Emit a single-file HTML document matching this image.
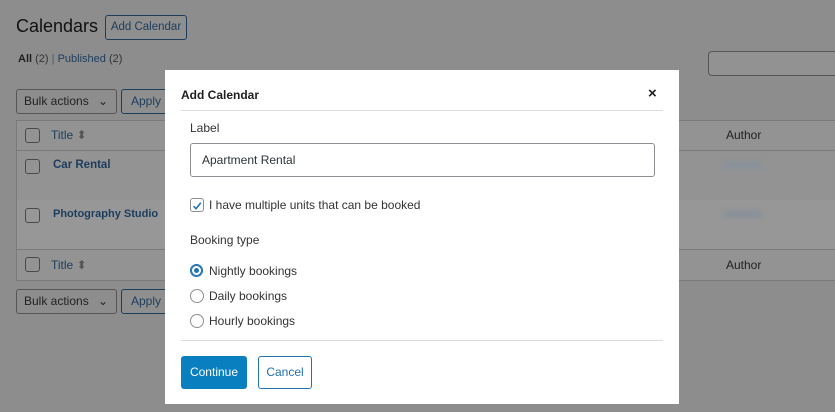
<!DOCTYPE html>
<html style="background:#8d8d8d"><head><style>
html,body{background:#8d8d8d !important}
body{margin:0;width:835px;height:412px;overflow:hidden;font-family:"Liberation Sans",sans-serif;position:relative;color:#1e1e1e}
.a{position:absolute}
.lk{color:#1d3d5c}
.btnbg{border:1px solid #1d3d5c;border-radius:3px;color:#1d3d5c;font-size:12px;background:#8f8f8f}
.cb{width:13px;height:13px;border:1px solid #4a4a4a;border-radius:3px}
</style></head><body>
<div class="a" style="left:0;top:0;width:835px;height:412px;background:#8d8d8d"></div>
<div class="a" style="left:16px;top:16px;font-size:18px;color:#111">Calendars</div>
<div class="a btnbg" style="left:105px;top:15px;width:80px;height:23px;line-height:23px;text-align:center;font-size:11.5px">Add Calendar</div>
<div class="a" style="left:18px;top:53px;font-size:11px;color:#222"><b>All</b> <span style="color:#333">(2)</span> <span style="color:#555">|</span> <span class="lk">Published</span> <span style="color:#333">(2)</span></div>
<div class="a" style="left:708px;top:51px;width:140px;height:23px;border:1px solid #555;border-radius:4px;background:#929292"></div>
<div class="a" style="left:16px;top:89px;width:99px;height:23px;border:1px solid #555;border-radius:3px;font-size:12px;line-height:23px;text-indent:7px;color:#222">Bulk actions <span style="position:absolute;right:8px">⌄</span></div>
<div class="a btnbg" style="left:121px;top:89px;width:50px;height:23px;line-height:23px;text-indent:9px">Apply</div>
<div class="a" style="left:16px;top:120px;width:819px;height:159px;background:#939393;border:1px solid #7b7b7b;border-right:none"></div>
<div class="a" style="left:17px;top:150px;width:818px;height:1px;background:#7b7b7b"></div>
<div class="a" style="left:17px;top:200px;width:818px;height:49px;background:#979797"></div>
<div class="a" style="left:17px;top:249px;width:818px;height:1px;background:#7b7b7b"></div>
<div class="a cb" style="left:25px;top:128px"></div>
<div class="a lk" style="left:51px;top:128px;font-size:12px">Title <span style="color:#555">⬍</span></div>
<div class="a cb" style="left:25px;top:159px"></div>
<div class="a lk" style="left:53px;top:159px;font-size:11.5px;font-weight:bold">Car Rental</div>
<div class="a cb" style="left:25px;top:208px"></div>
<div class="a lk" style="left:53px;top:208px;font-size:11px;font-weight:bold">Photography Studio</div>
<div class="a cb" style="left:25px;top:257px"></div>
<div class="a lk" style="left:51px;top:258px;font-size:12px">Title <span style="color:#555">⬍</span></div>
<div class="a" style="left:726px;top:128px;font-size:12px;color:#222">Author</div>
<div class="a" style="left:726px;top:258px;font-size:12px;color:#222">Author</div>
<div class="a" style="left:724px;top:161px;width:38px;height:8px;background:#8a919a;filter:blur(2px)"></div>
<div class="a" style="left:724px;top:210px;width:38px;height:8px;background:#8a919a;filter:blur(2px)"></div>
<div class="a" style="left:16px;top:289px;width:99px;height:23px;border:1px solid #555;border-radius:3px;font-size:12px;line-height:23px;text-indent:7px;color:#222">Bulk actions <span style="position:absolute;right:8px">⌄</span></div>
<div class="a btnbg" style="left:121px;top:289px;width:50px;height:23px;line-height:23px;text-indent:9px">Apply</div>

<div class="a" style="left:165px;top:70px;width:514px;height:334px;background:#fff"></div>
<div class="a" style="left:181px;top:88px;font-size:12px;font-weight:bold;color:#1e1e1e">Add Calendar</div>
<div class="a" style="left:648px;top:85px;font-size:15px;font-weight:bold">×</div>
<div class="a" style="left:181px;top:110px;width:482px;height:1px;background:#dcdcde"></div>
<div class="a" style="left:190px;top:121px;font-size:12px;color:#333">Label</div>
<div class="a" style="left:190px;top:143px;width:463px;height:32px;border:1px solid #8c8f94;border-radius:3px;font-size:12px;line-height:32px;text-indent:11px;color:#2c3338">Apartment Rental</div>
<div class="a" style="left:190px;top:198px;width:12px;height:12px;border:1px solid #8c8f94;border-radius:3px"><svg width="12" height="12" viewBox="0 0 12 12"><path d="M2.5 6.2 L5 8.7 L9.8 2.8" stroke="#2271b1" stroke-width="1.6" fill="none"/></svg></div>
<div class="a" style="left:209px;top:198px;font-size:12px;color:#333">I have multiple units that can be booked</div>
<div class="a" style="left:190px;top:233px;font-size:12px;color:#333">Booking type</div>
<div class="a" style="left:190px;top:264px;width:11px;height:11px;border:1px solid #2271b1;border-radius:50%;box-shadow:0 0 0 1px #2271b1 inset"></div>
<div class="a" style="left:194px;top:268px;width:5px;height:5px;background:#2271b1;border-radius:50%"></div>
<div class="a" style="left:209px;top:264px;font-size:12px;color:#333">Nightly bookings</div>
<div class="a" style="left:190px;top:289px;width:12px;height:12px;border:1px solid #8c8f94;border-radius:50%"></div>
<div class="a" style="left:209px;top:289px;font-size:12px;color:#333">Daily bookings</div>
<div class="a" style="left:190px;top:314px;width:12px;height:12px;border:1px solid #8c8f94;border-radius:50%"></div>
<div class="a" style="left:209px;top:314px;font-size:12px;color:#333">Hourly bookings</div>
<div class="a" style="left:181px;top:340px;width:482px;height:1px;background:#dcdcde"></div>
<div class="a" style="left:181px;top:356px;width:66px;height:33px;background:#0a7fbf;border-radius:3px;color:#fff;font-size:12px;line-height:33px;text-align:center">Continue</div>
<div class="a" style="left:258px;top:356px;width:52px;height:31px;border:1px solid #2271b1;border-radius:3px;color:#2271b1;font-size:12px;line-height:31px;text-align:center">Cancel</div>
</body></html>
